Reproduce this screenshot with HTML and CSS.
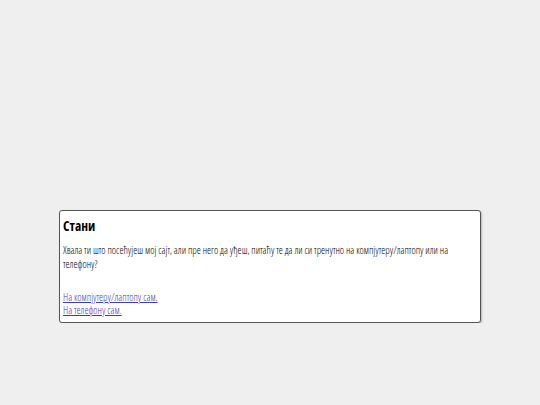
FILE: index.html
```html
<!DOCTYPE html>
<html lang="sr">
<head>
<meta charset="utf-8">
<link rel="stylesheet" href="styles.css">
</head>
<body>
<div class="page">
  <div class="box">
    <h1 class="title">Стани</h1>
    <p class="text">Хвала ти што посећујеш мој сајт, али пре него да уђеш, питаћу те да ли си тренутно на компјутеру/лаптопу или на телефону?</p>
    <div class="links">
      <a href="#" class="link">На компјутеру/лаптопу сам.</a>
      <a href="#" class="link">На телефону сам.</a>
    </div>
  </div>
</div>
</body>
</html>
```
FILE: styles.css
```css
html, body {
  margin: 0;
  padding: 0;
  background: #efefef;
}
.page {
  padding-top: 210px;
  font-family: "Open Sans", "DejaVu Sans Condensed", sans-serif;
  font-stretch: 75%;
}
.box {
  width: 414px;
  height: 103px;
  margin: 0 auto;
  background: #fff;
  border: 1px solid #555;
  border-radius: 3px;
  box-shadow: 1px 1px 2px rgba(0,0,0,0.25);
  padding: 4px 3px;
}
.title {
  margin: 0;
  font-size: 13.5px;
  font-weight: bold;
  line-height: 22px;
  color: #000;
}
.text {
  margin: 6px 0 0 0;
  font-size: 10.2px;
  font-weight: 300;
  line-height: 14px;
  color: #000;
}
.links {
  margin-top: 20px;
  display: flex;
  flex-direction: column;
  align-items: flex-start;
}
.link {
  font-size: 10.2px;
  font-weight: 300;
  line-height: 13px;
  color: #3a3ac8;
}
```
